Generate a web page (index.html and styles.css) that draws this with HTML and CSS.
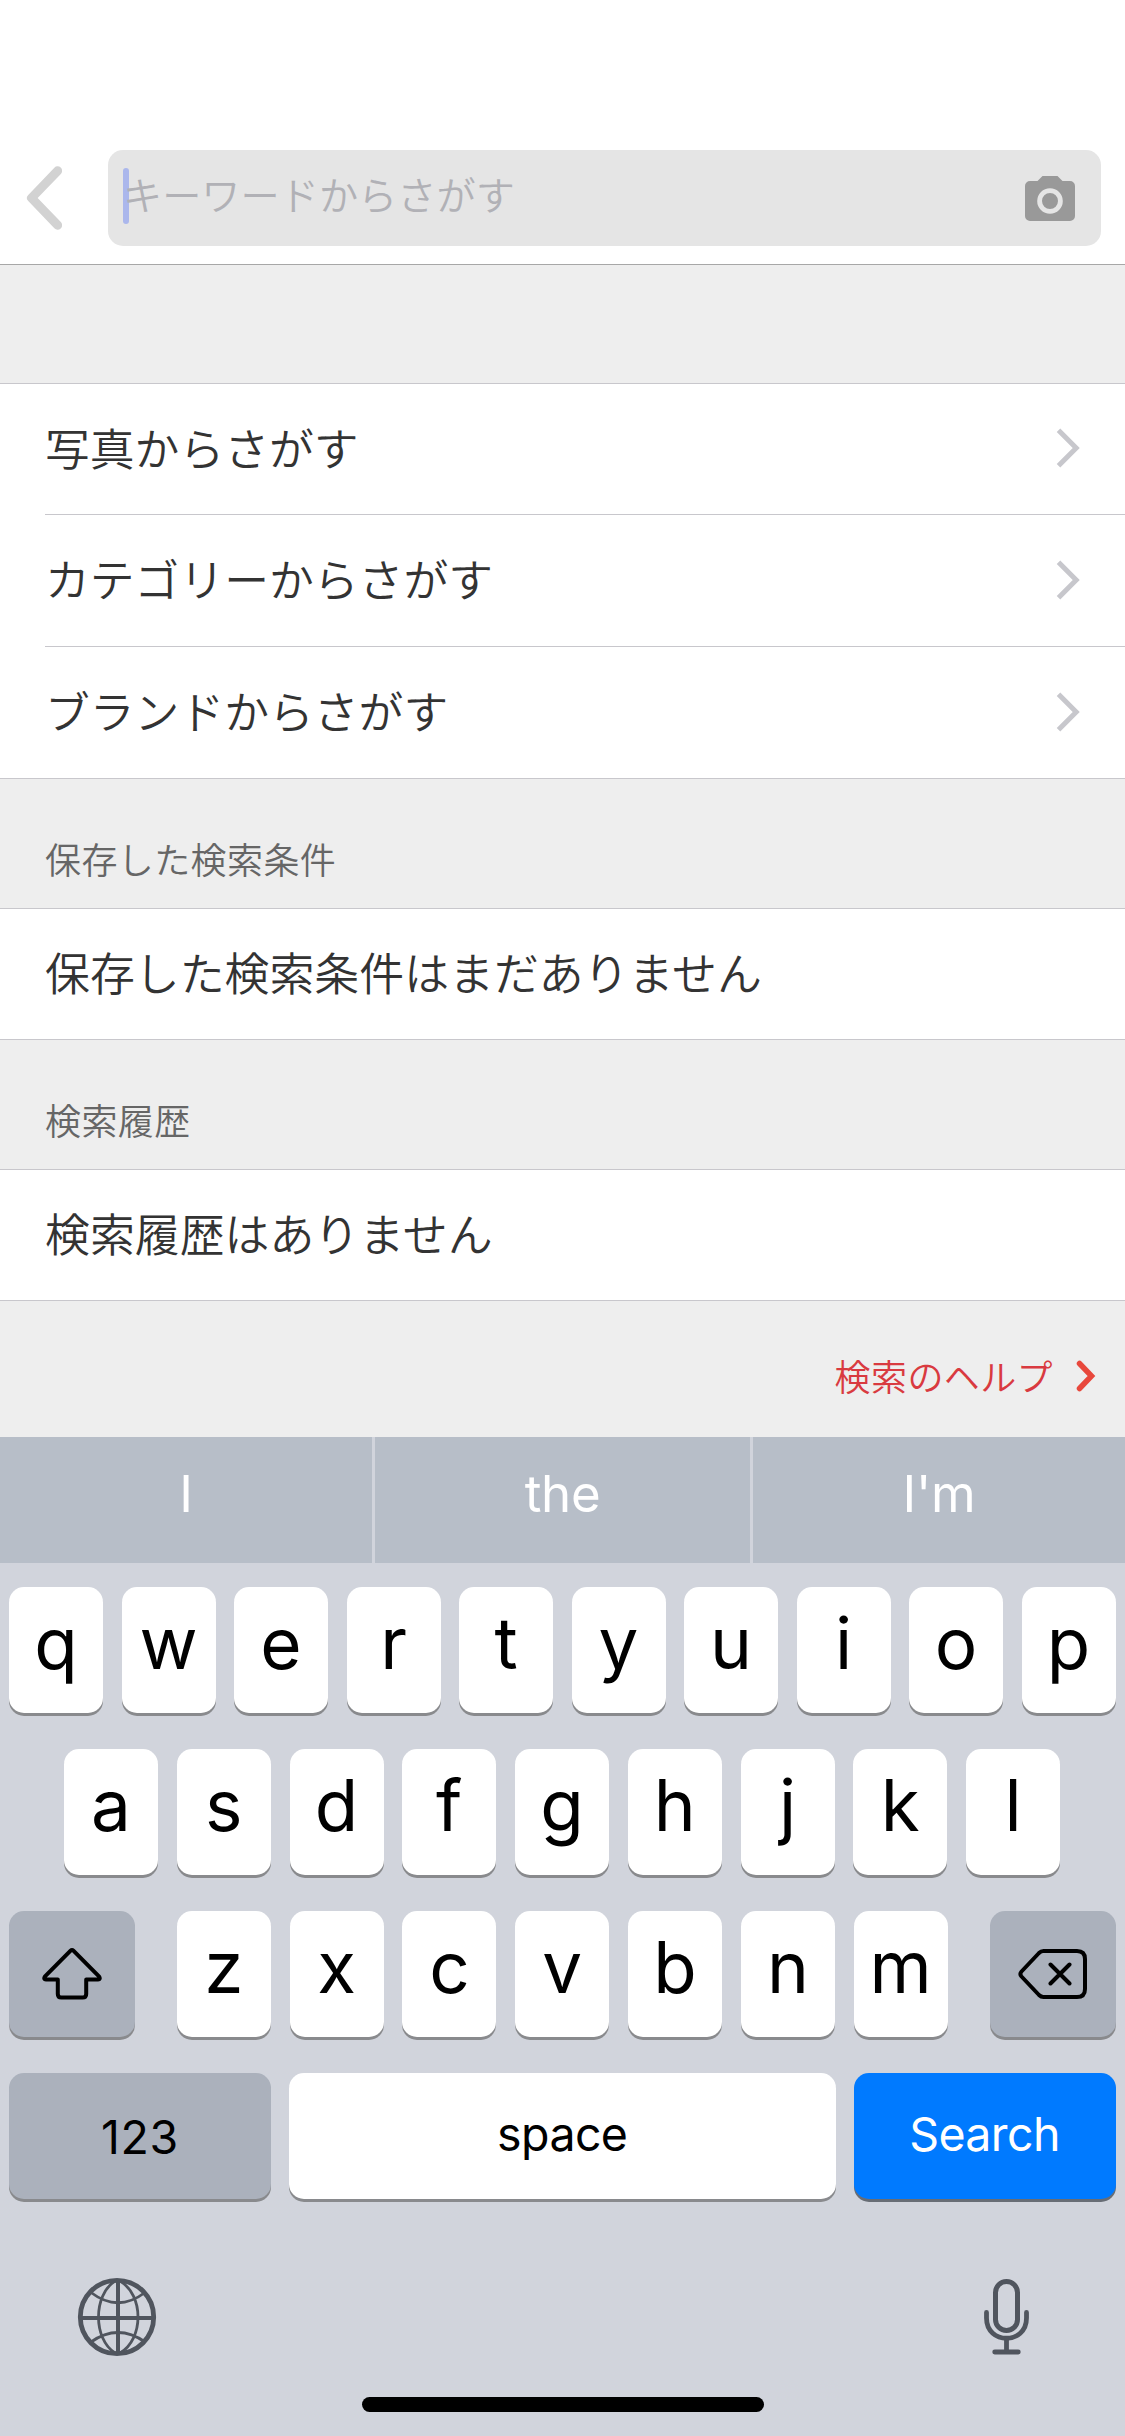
FILE: index.html
```html
<!DOCTYPE html>
<html lang="ja">
<head>
    <meta charset="UTF-8">
    <meta name="viewport" content="width=device-width, initial-scale=1.0">
    <title>さがす</title>
    <link rel="stylesheet" href="styles.css">
</head>
<body>
    <header class="header">
        <svg class="back" width="36" height="64" viewBox="0 0 36 64">
            <path d="M31.6 4.8 L5.5 32 L31.6 59.2"/>
        </svg>
        <div class="search-field">
            <span class="caret"></span>
            <span class="placeholder">キーワードからさがす</span>
            <svg class="camera" width="50" height="45" viewBox="0 0 50 45">
                <path class="camera-body" d="M17.5 0h15l5 5H45a5 5 0 0 1 5 5v30a5 5 0 0 1-5 5H5a5 5 0 0 1-5-5V10a5 5 0 0 1 5-5h7.5z"/>
                <circle class="camera-lens" cx="25" cy="25" r="10.4"/>
            </svg>
        </div>
    </header>

    <main class="content">
        <div class="spacer"></div>
        <ul class="menu">
            <li class="menu-item"><span>写真からさがす</span><svg class="chevron" width="24" height="40" viewBox="0 0 24 40"><path d="M2.5 2.3 L20.2 20 L2.5 37.7"/></svg></li>
            <li class="menu-item"><span>カテゴリーからさがす</span><svg class="chevron" width="24" height="40" viewBox="0 0 24 40"><path d="M2.5 2.3 L20.2 20 L2.5 37.7"/></svg></li>
            <li class="menu-item"><span>ブランドからさがす</span><svg class="chevron" width="24" height="40" viewBox="0 0 24 40"><path d="M2.5 2.3 L20.2 20 L2.5 37.7"/></svg></li>
        </ul>

        <h2 class="section-title">保存した検索条件</h2>
        <p class="empty">保存した検索条件はまだありません</p>

        <h2 class="section-title">検索履歴</h2>
        <p class="empty">検索履歴はありません</p>

        <a class="help">
            <span>検索のヘルプ</span>
            <svg width="20" height="32" viewBox="0 0 20 32"><path d="M3.5 3.5 L15.5 16 L3.5 28.5"/></svg>
        </a>
    </main>

    <section class="keyboard">
        <div class="suggestions">
            <span>I</span>
            <span>the</span>
            <span>I'm</span>
        </div>

        <div class="keys">
            <div class="key-row">
                <div class="key">q</div>
                <div class="key">w</div>
                <div class="key">e</div>
                <div class="key">r</div>
                <div class="key">t</div>
                <div class="key">y</div>
                <div class="key">u</div>
                <div class="key">i</div>
                <div class="key">o</div>
                <div class="key">p</div>
            </div>
            <div class="key-row middle">
                <div class="key">a</div>
                <div class="key">s</div>
                <div class="key">d</div>
                <div class="key">f</div>
                <div class="key">g</div>
                <div class="key">h</div>
                <div class="key">j</div>
                <div class="key">k</div>
                <div class="key">l</div>
            </div>
            <div class="key-row">
                <div class="key dark modifier">
                    <svg width="60" height="54" viewBox="0 0 60 54"><path d="M28.6 3.6 Q30 2.2 31.4 3.6 L57.2 29.7 Q58.7 32.3 56 32.5 H44.2 V47 Q44.2 50.5 40.7 50.5 H19.3 Q15.8 50.5 15.8 47 V32.5 H4 Q1.3 32.3 2.8 29.7 Z"/></svg>
                </div>
                <div class="letters">
                    <div class="key">z</div>
                    <div class="key">x</div>
                    <div class="key">c</div>
                    <div class="key">v</div>
                    <div class="key">b</div>
                    <div class="key">n</div>
                    <div class="key">m</div>
                </div>
                <div class="key dark modifier">
                    <svg width="70" height="52" viewBox="0 0 70 52"><path d="M25.5 3 H59 Q67 3 67 11 V41 Q67 49 59 49 H25.5 Q23 49 21 47 L3.5 28.5 Q1.3 26 3.5 23.5 L21 5 Q23 3 25.5 3 Z M32.5 16.5 L51.5 35.5 M51.5 16.5 L32.5 35.5"/></svg>
                </div>
            </div>
            <div class="key-row">
                <div class="key dark wide numbers">123</div>
                <div class="key space">space</div>
                <div class="key wide blue">Search</div>
            </div>
        </div>

        <div class="bottom-bar">
            <svg width="80" height="80" viewBox="0 0 80 80">
                <circle cx="40" cy="40" r="36.7" stroke-width="4.8"/>
                <path stroke-width="4" d="M41 4 V76 M4 41 H76"/>
                <path stroke-width="2.8" d="M38 4 C16 18 16 62 38 76 M43 4 C67 18 67 62 43 76 M14 15.5 Q41 36 68 15.5 M14 65 Q41 46 68 65"/>
            </svg>
            <svg width="48" height="80" viewBox="0 0 48 80">
                <rect x="11.5" y="4.5" width="22" height="49" rx="11" stroke-width="5"/>
                <path stroke-width="4.8" stroke-linecap="round" d="M2.5 35.5 V41 C2.5 68 42.5 68 42.5 41 V35.5"/>
                <path stroke-width="4.8" stroke-linecap="round" d="M22.5 62 V75 M10.7 75 H34.3"/>
            </svg>
        </div>
        <div class="home-indicator"></div>
    </section>
</body>
</html>
```

FILE: styles.css
```css
* {
    box-sizing: border-box;
}

body {
    margin: 0;
    width: 1125px;
    height: 2436px;
    display: flex;
    flex-direction: column;
    overflow: hidden;
    background-color: #eee;
    color: #333;
    font-family: "Noto Sans CJK JP", sans-serif;
    font-weight: 350;
}

svg {
    display: block;
    flex: none;
    fill: none;
}

/* header */
.header {
    height: 265px;
    padding: 150px 24px 18px 26px;
    display: flex;
    align-items: center;
    background-color: #fff;
    border-bottom: 1px solid #a7a7a7;
}

.back {
    stroke: #d2d2d2;
    stroke-width: 9;
    stroke-linecap: round;
    stroke-linejoin: round;
}

.search-field {
    flex: 1;
    height: 96px;
    margin-left: 46px;
    padding: 0 26px 0 15px;
    display: flex;
    align-items: center;
    background-color: #e5e5e5;
    border-radius: 15px;
}

.caret {
    width: 6px;
    height: 56px;
    margin-right: -6px;
    margin-bottom: 4px;
    border-radius: 3px;
    background-color: #abb7ec;
}

.placeholder {
    flex: 1;
    font-size: 39.2px;
    line-height: 56px;
    margin-bottom: 10px;
    color: #b1b1b6;
}

.camera-body {
    fill: #999;
}

.camera-lens {
    stroke: #e5e5e5;
    stroke-width: 4.8;
}

/* list */
.content {
    height: 1172px;
}

.spacer {
    height: 119px;
    border-bottom: 1px solid #c8c7cc;
}

.menu {
    margin: 0;
    padding: 0 0 0 45px;
    list-style: none;
    background-color: #fff;
    border-bottom: 1px solid #c8c7cc;
}

.menu-item {
    height: 132px;
    padding: 0 45px 6px 0;
    display: flex;
    align-items: center;
    justify-content: space-between;
    font-size: 44.8px;
    border-bottom: 1px solid #c8c7cc;
}

.menu-item:first-child {
    height: 131px;
}

.menu-item:last-child {
    height: 131px;
    border-bottom: none;
}

.chevron {
    margin-top: 4px;
    stroke: #c7c7cc;
    stroke-width: 5;
}

.section-title {
    margin: 0;
    height: 130px;
    padding: 52px 0 0 45px;
    font-size: 36px;
    font-weight: 350;
    line-height: 54px;
    letter-spacing: 0.4px;
    color: #666;
    border-bottom: 1px solid #c8c7cc;
}

.empty {
    margin: 0;
    height: 131px;
    padding-left: 45px;
    font-size: 44.9px;
    line-height: 125px;
    background-color: #fff;
    border-bottom: 1px solid #c8c7cc;
}

.help {
    height: 136px;
    padding: 11px 29px 0 0;
    display: flex;
    align-items: center;
    justify-content: flex-end;
    gap: 23px;
    font-size: 36px;
    letter-spacing: 0.4px;
    color: #d93a40;
}

.help svg {
    margin-top: 3px;
    stroke: #e8483c;
    stroke-width: 5.5;
    stroke-linecap: round;
}

/* keyboard */
.keyboard {
    height: 999px;
    background-color: #d1d4dc;
    font-family: Inter, "Liberation Sans", sans-serif;
    font-weight: 400;
    color: #000;
}

.suggestions {
    height: 126px;
    display: flex;
    gap: 3px;
}

.suggestions span {
    width: 372px;
    background-color: #b7bec8;
    color: #fff;
    font-size: 51px;
    line-height: 114px;
    letter-spacing: -0.3px;
    text-align: center;
}

.suggestions span:nth-child(2) {
    width: 375px;
}

.keys {
    padding: 24px 9.5px 0 9px;
    display: flex;
    flex-direction: column;
    gap: 36px;
}

.key-row {
    height: 126px;
    display: flex;
    justify-content: space-between;
}

.middle {
    padding: 0 55.5px 0 55px;
}

.key {
    width: 94px;
    height: 126px;
    border-radius: 15px;
    background-color: #fff;
    box-shadow: 0 3px 0 #898a8d;
    font-size: 71px;
    font-weight: 400;
    line-height: 112px;
    text-align: center;
}

.letters {
    width: 771px;
    display: flex;
    justify-content: space-between;
}

.dark {
    background-color: #abb1bc;
}

.modifier {
    width: 126px;
    display: flex;
    align-items: center;
    justify-content: center;
    stroke: #000;
    stroke-width: 4;
    stroke-linecap: round;
    stroke-linejoin: round;
}

.wide {
    width: 262px;
}

.space {
    width: 547px;
}

.wide,
.space {
    font-size: 46.5px;
    line-height: 122px;
    letter-spacing: -0.6px;
}

.numbers {
    line-height: 128px;
    letter-spacing: 0.6px;
}

.blue {
    background-color: #007aff;
    color: #fff;
    box-shadow: 0 3px 0 #686d75;
}

.bottom-bar {
    height: 198px;
    padding: 78px 93px 0 77px;
    display: flex;
    justify-content: space-between;
    stroke: #50555e;
}

.home-indicator {
    width: 402px;
    height: 15px;
    margin: 0 auto;
    border-radius: 8px;
    background-color: #000;
}
```
